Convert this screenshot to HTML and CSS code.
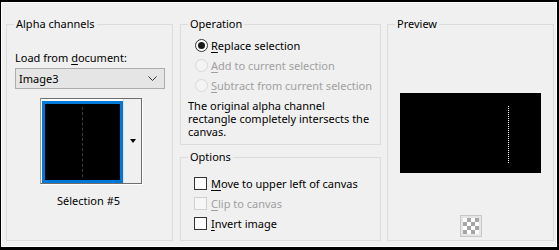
FILE: index.html
```html
<!DOCTYPE html>
<html>
<head>
<meta charset="utf-8">
<link rel="stylesheet" href="styles.css">
</head>
<body>
<div class="window">
  <div class="inner">
    <fieldset class="group alpha">
      <legend>Alpha channels</legend>
      <div class="label">Load from <u>d</u>ocument:</div>
      <div class="combo"><span>Image3</span>
        <svg class="chev" width="9" height="6" viewBox="0 0 9 6"><polyline points="0.5,0.5 4.5,4.5 8.5,0.5" fill="none" stroke="#333" stroke-width="1"/></svg>
      </div>
      <div class="thumb">
        <div class="thumb-sel"><div class="thumb-img"><div class="dots dark"></div></div></div>
        <div class="thumb-btn"><span class="tri"></span></div>
      </div>
      <div class="caption">Sélection #5</div>
    </fieldset>
    <div class="midcol">
      <fieldset class="group operation">
        <legend>Operation</legend>
        <div class="row"><span class="radio on"></span><span><u>R</u>eplace selection</span></div>
        <div class="row dis"><span class="radio"></span><span><u>A</u>dd to current selection</span></div>
        <div class="row dis"><span class="radio"></span><span><u>S</u>ubtract from current selection</span></div>
        <p class="info">The original alpha channel rectangle completely intersects the canvas.</p>
      </fieldset>
      <fieldset class="group options">
        <legend>Options</legend>
        <div class="row"><span class="check"></span><span><u>M</u>ove to upper left of canvas</span></div>
        <div class="row dis"><span class="check"></span><span><u>C</u>lip to canvas</span></div>
        <div class="row"><span class="check"></span><span><u>I</u>nvert image</span></div>
      </fieldset>
    </div>
    <fieldset class="group preview">
      <legend>Preview</legend>
      <div class="pv"><div class="dots light"></div></div>
      <div class="checker"><div class="checker-in"></div></div>
    </fieldset>
  </div>
</div>
</body>
</html>
```

FILE: styles.css
```css
html, body { margin: 0; padding: 0; background: #f0f0f0; }
body { font-family: "Noto Sans", "DejaVu Sans", sans-serif; font-size: 11px; color: #000; }
.window {
  width: 559px; height: 250px; box-sizing: border-box;
  border-style: solid; border-color: #000;
  border-width: 2px 2px 3px 1px;
}
.inner {
  height: 100%; box-sizing: border-box;
  border: 1px solid #fff; background: #f0f0f0;
  padding: 13px 0 0 4px;
  display: flex; gap: 7px; align-items: flex-start;
}
u { text-decoration: underline; text-underline-offset: 2px; }
.group {
  margin: 0; padding: 0; border: 1px solid #dcdcdc;
  box-sizing: border-box; min-width: 0;
}
.group legend {
  padding: 0 2px; margin-left: 7px; line-height: 16px; height: 16px;
}
.alpha { width: 167px; height: 225px; }
.midcol { display: flex; flex-direction: column; gap: 4px; width: 201px; }
.operation { height: 129px; }
.options { height: 92px; }
.preview { width: 167px; height: 225px; margin-left: -1px; }

.label { margin: 18px 0 0 8px; line-height: 16px; }
.combo {
  margin: 2px 0 0 8px; width: 150px; height: 21px; box-sizing: border-box;
  border: 1px solid #adadad; background: #e5e5e5;
  display: flex; align-items: center; justify-content: space-between;
  padding: 0 7px 0 3px;
}
.combo span { line-height: 16px; }
.thumb {
  margin: 9px 0 0 33px; width: 102px; height: 86px; box-sizing: border-box;
  border: 1px solid #6e6e6e; border-left-color: #a0a0a0;
  box-shadow: 1px 1px 0 #fff;
  display: flex; padding: 2px 0 0 1px; background: #fff;
}
.thumb-sel {
  width: 81px; height: 82px; box-sizing: border-box;
  border: 3px solid #0078d7; background: #000;
}
.thumb-img { height: 100%; display: flex; justify-content: center; padding: 3px 0; box-sizing: border-box; }
.dots { width: 0; }
.dots.dark { border-left: 1px dashed #3c3c3c; height: 100%; }
.thumb-btn {
  flex: 1; background: #f0f0f0; margin-top: -2px; border-left: 1px solid #e0e0e0;
  display: flex; align-items: center; justify-content: center;
}
.tri {
  width: 0; height: 0; border-left: 3.5px solid transparent; border-right: 3.5px solid transparent;
  border-top: 4px solid #000; margin-left: 1px;
}
.caption { margin-top: 9px; text-align: center; line-height: 16px; padding-right: 2px; }

.row { display: flex; align-items: center; height: 20px; margin-left: 14px; }
.operation .row:first-of-type { margin-top: 3px; }
.row.dis { color: #a0a0a0; }
.radio {
  width: 13px; height: 13px; box-sizing: border-box; border-radius: 50%;
  border: 1px solid #333; background: #fff; margin-right: 3px; flex: none;
  display: flex; align-items: center; justify-content: center;
}
.radio.on::after { content: ""; width: 7px; height: 7px; border-radius: 50%; background: #1a1a1a; }
.row.dis .radio { border-color: #d8d8d8; background: #f4f4f4; }
.info { margin: 4px 6px 0 7px; line-height: 13px; }
.options .row { margin-left: 13px; }
.options .row:first-of-type { margin-top: 8px; }
.check {
  width: 13px; height: 13px; box-sizing: border-box;
  border: 1px solid #333; background: #fff; margin-right: 4px; flex: none;
}
.row.dis .check { border-color: #d0d0d0; background: #f6f6f6; }

.pv {
  margin: 61px auto 0; width: 141px; height: 80px; background: #000;
  display: flex; justify-content: flex-end; padding: 13px 32px 10px 0; box-sizing: border-box;
}
.dots.light { border-left: 1px dotted #fff; height: 100%; }
.checker {
  margin: 42px auto 0; width: 22px; height: 22px; box-sizing: border-box;
  border: 1px solid #c8c8c8; background: #e6e6e6; padding: 2px;
}
.checker-in {
  width: 100%; height: 100%;
  background-color: #fff;
  background-image:
    linear-gradient(45deg, #a6a6a6 25%, transparent 25%, transparent 75%, #a6a6a6 75%),
    linear-gradient(45deg, #a6a6a6 25%, transparent 25%, transparent 75%, #a6a6a6 75%);
  background-size: 8px 8px; background-position: 0 0, 4px 4px;
}
```
